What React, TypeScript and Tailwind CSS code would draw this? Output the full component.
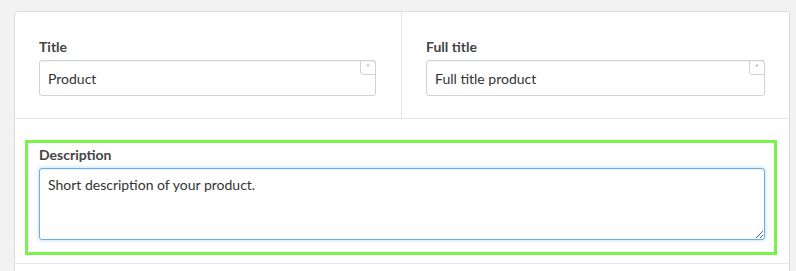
import React from "react";

function TextField({ label, value }: { label: string; value: string }) {
  return (
    <div className="flex flex-col gap-[3px]">
      <label className="text-[14px] leading-5 font-bold text-[#444]">{label}</label>
      <div className="relative">
        <input
          readOnly
          value={value}
          className="h-[36px] w-full rounded-[3px] border border-[#cfd3d6] bg-white px-2 text-[14px] text-[#333] outline-none shadow-[inset_0_1px_1px_rgba(0,0,0,0.05)]"
        />
        <span className="absolute right-0 top-0 flex h-[15px] w-[16px] items-center justify-center rounded-bl-[3px] rounded-tr-[3px] border border-[#cfd3d6] text-[9px] leading-none text-[#aaa]">
          *
        </span>
      </div>
    </div>
  );
}

export default function App() {
  return (
    <div className="min-h-[271px] w-[796px] overflow-hidden bg-[#f2f2f2] pl-[14px] pr-[6px] pt-[11px] font-['Lato','Open_Sans',sans-serif]">
      <div className="rounded-t-[3px] border border-[#dcdcdc] bg-white">
        {/* top row — two fields */}
        <div className="grid grid-cols-[387px_1fr] border-b border-[#e6e6e6]">
          <div className="border-r border-[#e6e6e6] pb-[22px] pl-[24px] pr-[25px] pt-[25px]">
            <TextField label="Title" value="Product" />
          </div>
          <div className="pb-[22px] pl-[24px] pr-[24px] pt-[25px]">
            <TextField label="Full title" value="Full title product" />
          </div>
        </div>

        {/* description row */}
        <div className="border-b border-[#e6e6e6] pb-[8px] pl-[10px] pr-[12px] pt-[21px]">
          <div className="border-[3px] border-[#79f24c] pb-[12px] pl-[11px] pr-[9px] pt-[2px]">
            <label className="block text-[14px] leading-5 font-bold text-[#444]">Description</label>
            <textarea
              readOnly
              value="Short description of your product."
              className="mt-[3px] block h-[72px] w-full resize-y rounded-[3px] border border-[#66afe9] bg-white px-2 pt-[6px] text-[14px] leading-5 text-[#333] outline-none shadow-[inset_0_1px_1px_rgba(0,0,0,0.075),0_0_4px_rgba(102,175,233,0.5)]"
            />
          </div>
        </div>
        <div className="h-[20px]" />
      </div>
    </div>
  );
}
